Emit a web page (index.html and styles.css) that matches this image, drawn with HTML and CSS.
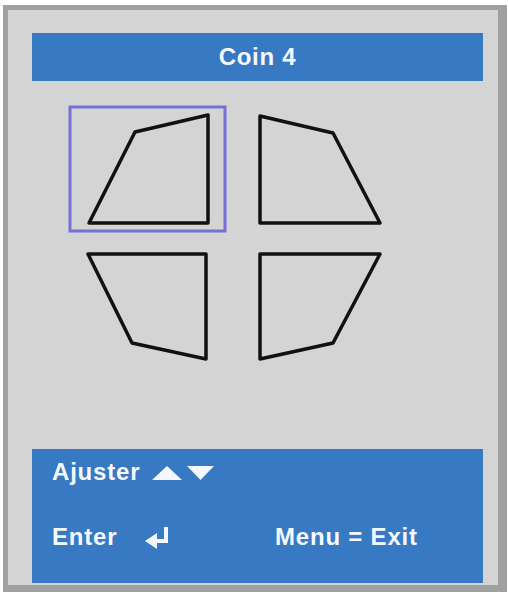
FILE: index.html
```html
<!DOCTYPE html>
<html lang="fr">
<head>
    <meta charset="UTF-8">
    <meta name="viewport" content="width=device-width, initial-scale=1.0">
    <title>Coin 4</title>
    <link rel="stylesheet" href="styles.css">
</head>
<body>

    <div class="osd">
        <div class="osd-title">Coin 4</div>

        <!-- les quatre coins, le coin actif est encadre -->
        <svg class="coins" width="451" height="368" viewBox="0 0 451 368">
            <rect class="selection" x="38" y="26" width="155" height="124"/>
            <polygon class="coin" points="57,142 103,51 176,34 176,142"/>
            <polygon class="coin" points="228,35 301,52 348,142 228,142"/>
            <polygon class="coin" points="56,173 174,173 174,278 100,262"/>
            <polygon class="coin" points="228,173 348,173 301,262 228,278"/>
        </svg>

        <div class="osd-aide">
            <div class="ligne">
                <span>Ajuster</span>
                <svg class="fleche haut" width="30" height="14" viewBox="0 0 30 14"><polygon points="15,0 30,14 0,14"/></svg>
                <svg class="fleche" width="27" height="14" viewBox="0 0 27 14"><polygon points="0,0 27,0 13.5,14"/></svg>
            </div>
            <div class="ligne ligne-bas">
                <span class="touche">Enter
                    <svg class="entree" width="26" height="20" viewBox="0 0 26 20">
                        <path d="M21 0 V14 H10" />
                        <polygon points="0,14 12,6 12,22" />
                    </svg>
                </span>
                <span>Menu = Exit</span>
            </div>
        </div>
    </div>

</body>
</html>
```

FILE: styles.css
```css
body {
    margin: 0;
    background-color: white;
    font-family: "Liberation Sans", Arial, sans-serif;
}
.osd {
    width: 504px;
    height: 587px;
    margin: 5px 0 0 3px;
    box-sizing: border-box;
    border: 5px solid #a0a0a0;
    border-right-width: 9px;
    border-bottom-width: 7px;
    background-color: #d4d4d4;
    padding: 23px 6px 2px 24px;
    display: flex;
    flex-direction: column;
}
.osd-title {
    width: 451px;
    height: 48px;
    background-color: #3879c3;
    color: #f4f8fc;
    font-size: 24px;
    font-weight: bold;
    letter-spacing: 0.7px;
    text-align: center;
    line-height: 48px;
}
.coins {
    display: block;
    flex: none;
}
.selection {
    fill: none;
    stroke: #7670d6;
    stroke-width: 3;
}
.coin {
    fill: none;
    stroke: #111;
    stroke-width: 3.5;
    stroke-linejoin: round;
}
.osd-aide {
    width: 451px;
    height: 134px;
    box-sizing: border-box;
    background-color: #3879c3;
    color: #f4f8fc;
    font-size: 24px;
    font-weight: bold;
    letter-spacing: 0.8px;
    line-height: 26px;
    padding: 10px 0 0 20px;
}
.ligne {
    display: flex;
    align-items: center;
}
.ligne-bas {
    margin-top: 39px;
}
.fleche {
    fill: #f4f8fc;
    margin-left: 5px;
    margin-top: 2px;
}
.fleche.haut {
    margin-left: 12px;
}
.touche {
    display: flex;
    align-items: center;
    width: 223px;
}
.entree {
    margin-left: 28px;
    margin-top: 0;
    overflow: visible;
}
.entree path {
    fill: none;
    stroke: #f4f8fc;
    stroke-width: 4;
}
.entree polygon {
    fill: #f4f8fc;
}
```
